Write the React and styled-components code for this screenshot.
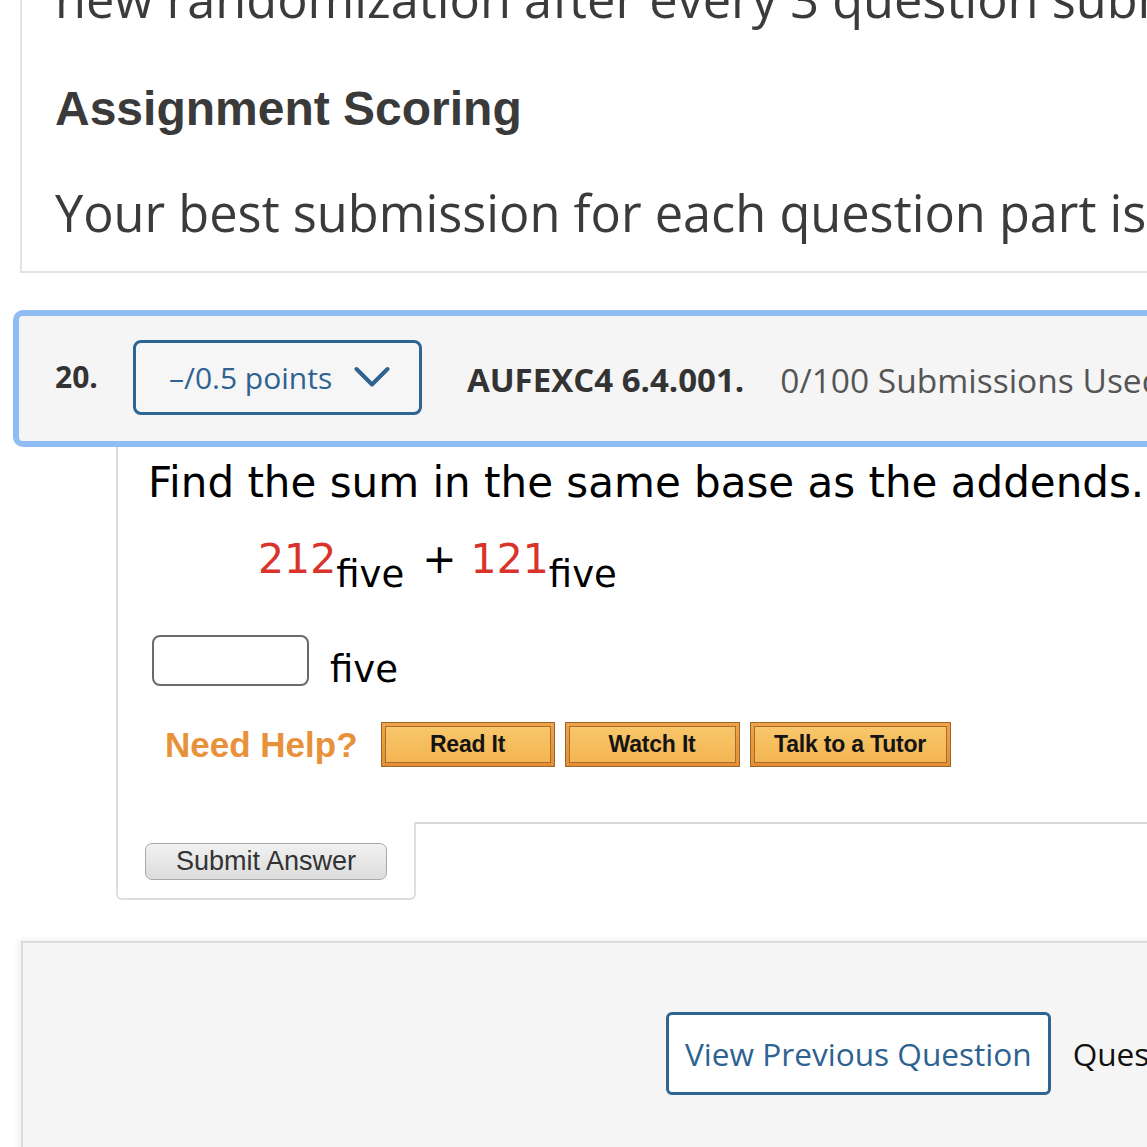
import React from "react";
import styled, { createGlobalStyle } from "styled-components";

const GlobalStyle = createGlobalStyle`
  html, body { margin: 0; padding: 0; background: #ffffff; }
  body { overflow: hidden; }
`;

const Page = styled.div`
  width: 1147px;
  height: 1147px;
  overflow: hidden;
  background: #fff;
  position: relative;
`;

const InfoCard = styled.section`
  margin-top: -31px;
  margin-left: 20px;
  width: 1400px;
  border-left: 2px solid #e3e3e3;
  border-bottom: 2px solid #e3e3e3;
  padding: 0 0 28px 33px;
  box-sizing: border-box;
`;

const InfoText = styled.p`
  margin: 0;
  font-family: "Open Sans", sans-serif;
  font-size: 50.5px;
  line-height: 60px;
  color: #3b3b3b;
  white-space: nowrap;
`;

const InfoHeading = styled.h2`
  margin: ${(p) => p.$top}px 0 ${(p) => p.$bottom}px;
  font-family: "Liberation Sans", Arial, sans-serif;
  font-weight: bold;
  font-size: 48px;
  line-height: 56px;
  color: #3a3a3a;
  white-space: nowrap;
`;

const QuestionHeader = styled.div`
  margin: 37px 0 0 13px;
  width: 1300px;
  height: 137px;
  box-sizing: border-box;
  border: 6px solid #8fbcf2;
  border-radius: 10px;
  background: #f5f5f5;
  display: flex;
  align-items: center;
  padding-left: 36px;
  font-family: "Open Sans", sans-serif;
  white-space: nowrap;
`;

const QNumber = styled.span`
  font-weight: bold;
  font-size: 30px;
  color: #333;
  margin-right: 35px;
  margin-top: -4px;
`;

const PointsButton = styled.button`
  display: flex;
  align-items: center;
  gap: 22px;
  height: 75px;
  width: 289px;
  box-sizing: border-box;
  padding: 0 0 0 33px;
  border: 3px solid #2f6593;
  border-radius: 8px;
  background: #f6f6f6;
  font-family: "Open Sans", sans-serif;
  font-size: 30px;
  color: #2e6391;
  margin-right: 45px;
  margin-top: -3px;
`;

const QuestionCode = styled.span`
  font-weight: bold;
  font-size: 33px;
  color: #333;
  margin-right: 36px;
  margin-top: 2px;
`;

const SubmissionsUsed = styled.span`
  font-size: 33.5px;
  color: #555;
  margin-top: 2px;
`;

const QuestionBody = styled.div`
  margin-left: 116px;
  width: 1300px;
  box-sizing: border-box;
  border-left: 2px solid #dedede;
  border-bottom: 2px solid #d8d8d8;
  padding: 6px 0 0 30px;
  height: 377px;
  font-family: "DejaVu Sans", Verdana, sans-serif;
  color: #000;
`;

const Prompt = styled.p`
  margin: 0;
  font-size: 42px;
  line-height: 60px;
  white-space: nowrap;
`;

const Expression = styled.div`
  margin: 16px 0 0 110px;
  font-size: 41px;
  line-height: 60px;
  white-space: nowrap;
`;

const Num = styled.span`
  color: #d9342b;
`;

const Sub = styled.sub`
  font-size: 37px;
  vertical-align: -14px;
  line-height: 0;
`;

const Plus = styled.span`
  margin: 0 14px 0 18px;
`;

const AnswerRow = styled.div`
  display: flex;
  align-items: flex-end;
  gap: 21px;
  margin: 46px 0 0 4px;
`;

const AnswerInput = styled.input`
  width: 157px;
  height: 51px;
  box-sizing: border-box;
  border: 2px solid #6a6a6a;
  border-radius: 8px;
  background: #fff;
`;

const Unit = styled.span`
  font-size: 37px;
  line-height: 40px;
  margin-bottom: -4px;
`;

const HelpRow = styled.div`
  display: flex;
  align-items: center;
  gap: 10px;
  margin: 36px 0 0 17px;
`;

const NeedHelp = styled.span`
  font-family: "Liberation Sans", Arial, sans-serif;
  font-weight: bold;
  font-size: 35px;
  color: #e8913b;
  margin-right: 13px;
`;

const HelpButton = styled.button`
  width: ${(p) => p.$w}px;
  height: 45px;
  box-sizing: border-box;
  padding: 3px;
  border: 1px solid #9c662a;
  background: linear-gradient(#f0a447, #e48f33);
  display: flex;
`;

const HelpFace = styled.span`
  flex: 1;
  display: flex;
  align-items: center;
  justify-content: center;
  border: 1px solid #a86c2c;
  background: linear-gradient(#f8c66a, #f3b553);
  font-family: "Liberation Sans", Arial, sans-serif;
  font-weight: bold;
  font-size: 23px;
  color: #141414;
  letter-spacing: -0.2px;
`;

const SubmitTab = styled.div`
  margin: -2px 0 0 116px;
  width: 300px;
  height: 78px;
  box-sizing: border-box;
  border: 2px solid #dedede;
  border-top: none;
  border-radius: 0 0 6px 6px;
  background: #fff;
  padding: 21px 0 0 27px;
`;

const SubmitButton = styled.button`
  width: 242px;
  height: 37px;
  box-sizing: border-box;
  border: 1px solid #a9a9a9;
  border-radius: 7px;
  background: linear-gradient(#f1f1f1, #dcdcdc);
  font-family: "Liberation Sans", Arial, sans-serif;
  font-size: 27px;
  color: #333;
  padding: 0;
  line-height: 33px;
`;

const NavPanel = styled.div`
  margin: 41px 0 0 21px;
  width: 1300px;
  height: 300px;
  box-sizing: border-box;
  background: #f5f5f5;
  border-top: 2px solid #dcdcdc;
  border-left: 2px solid #dcdcdc;
  box-shadow: -3px -2px 6px rgba(0, 0, 0, 0.06);
  display: flex;
  align-items: flex-start;
  gap: 22px;
  padding: 69px 0 0 643px;
  font-family: "Open Sans", sans-serif;
  white-space: nowrap;
`;

const NavButton = styled.button`
  height: 83px;
  box-sizing: border-box;
  border: 3px solid #2f6593;
  border-radius: 6px;
  background: #fff;
  padding: 0 16px;
  font-family: "Open Sans", sans-serif;
  font-size: 31.6px;
  color: #2e6391;
`;

const NavLabel = styled.span`
  font-size: 31.6px;
  color: #111;
  line-height: 83px;
`;

const Chevron = () => (
  <svg width="36" height="22" viewBox="0 0 36 22" fill="none">
    <polyline
      points="2.5,3 18,18.5 33.5,3"
      stroke="#2e6391"
      strokeWidth="4"
      strokeLinecap="round"
      strokeLinejoin="round"
    />
  </svg>
);

export default function App() {
  return (
    <Page>
      <GlobalStyle />
      <InfoCard>
        <InfoText>new randomization after every 3 question submissions.</InfoText>
        <InfoHeading $top={52} $bottom={46}>Assignment Scoring</InfoHeading>
        <InfoText>Your best submission for each question part is used for your score.</InfoText>
      </InfoCard>

      <QuestionHeader>
        <QNumber>20.</QNumber>
        <PointsButton>
          <span>–/0.5 points</span>
          <Chevron />
        </PointsButton>
        <QuestionCode>AUFEXC4 6.4.001.</QuestionCode>
        <SubmissionsUsed>0/100 Submissions Used</SubmissionsUsed>
      </QuestionHeader>

      <QuestionBody>
        <Prompt>Find the sum in the same base as the addends.</Prompt>
        <Expression>
          <Num>212</Num>
          <Sub>five</Sub>
          <Plus>+</Plus>
          <Num>121</Num>
          <Sub>five</Sub>
        </Expression>
        <AnswerRow>
          <AnswerInput type="text" aria-label="answer" />
          <Unit>five</Unit>
        </AnswerRow>
        <HelpRow>
          <NeedHelp>Need Help?</NeedHelp>
          <HelpButton $w={174}><HelpFace>Read It</HelpFace></HelpButton>
          <HelpButton $w={175}><HelpFace>Watch It</HelpFace></HelpButton>
          <HelpButton $w={201}><HelpFace>Talk to a Tutor</HelpFace></HelpButton>
        </HelpRow>
      </QuestionBody>
      <SubmitTab>
        <SubmitButton>Submit Answer</SubmitButton>
      </SubmitTab>

      <NavPanel>
        <NavButton>View Previous Question</NavButton>
        <NavLabel>Question 20 of 20</NavLabel>
      </NavPanel>
    </Page>
  );
}
